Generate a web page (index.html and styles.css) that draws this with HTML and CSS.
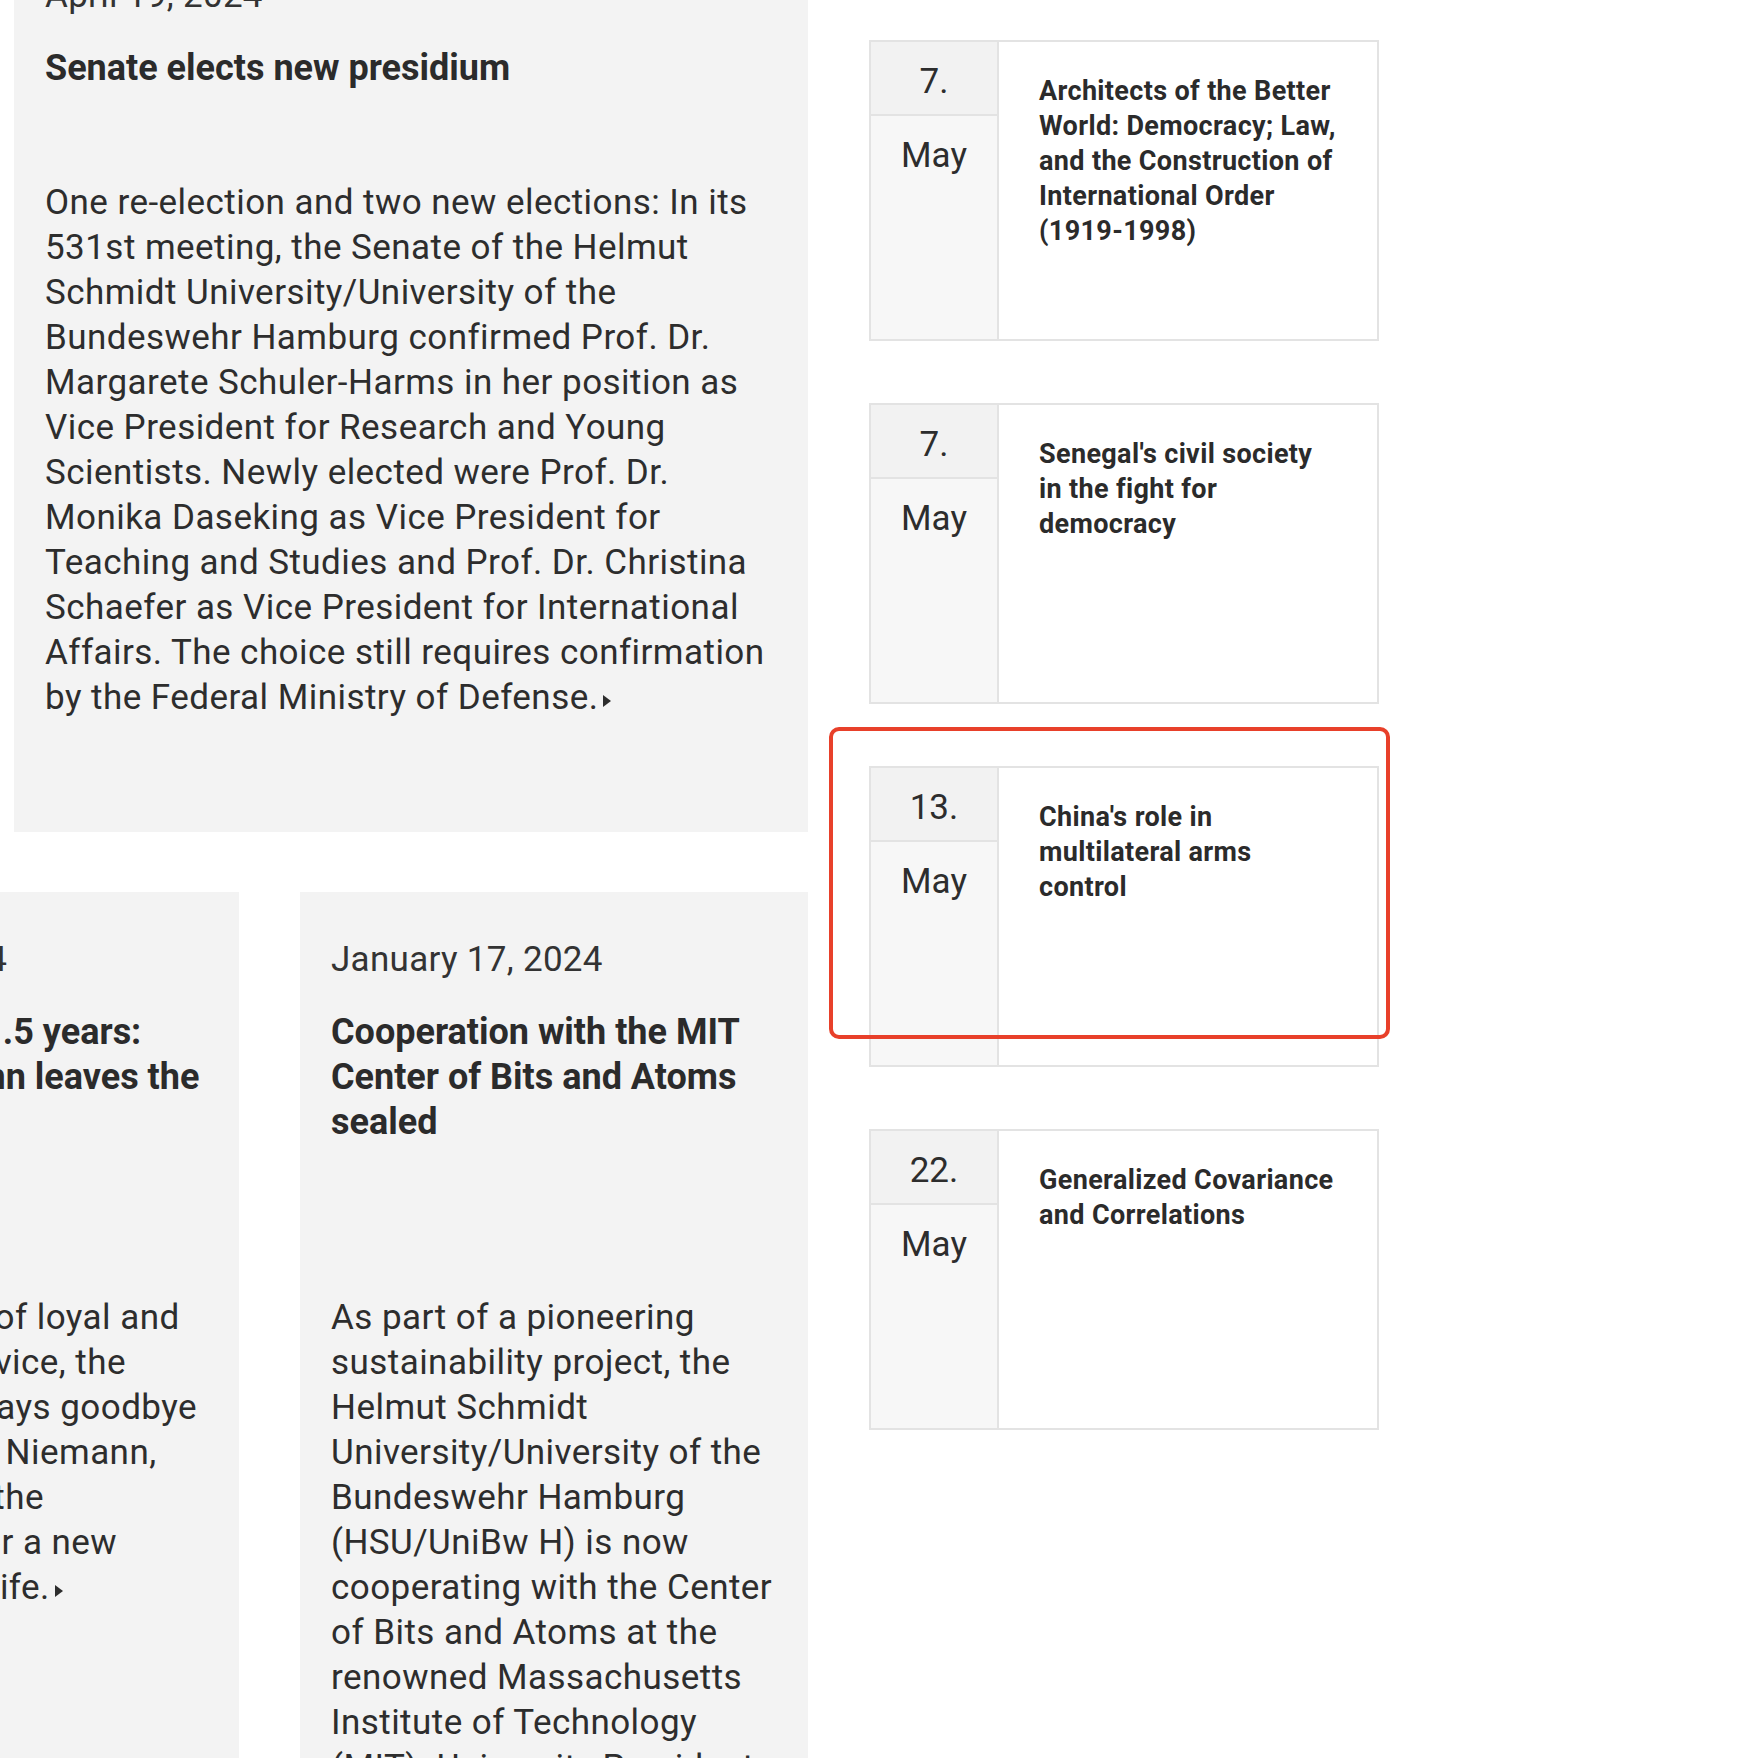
FILE: index.html
```html
<!DOCTYPE html>
<html lang="en">
<head>
<meta charset="utf-8">
<title>News and Events</title>
<link rel="stylesheet" href="styles.css">
</head>
<body>
<div class="page">
  <main class="layout">
    <section class="news">
      <article class="news-card news-card--featured">
        <p class="news-date">April 19, 2024</p>
        <h2 class="news-title">Senate elects new presidium</h2>
        <p class="news-text">One re-election and two new elections: In its 531st meeting, the Senate of the Helmut Schmidt University/University of the Bundeswehr Hamburg confirmed Prof. Dr. Margarete Schuler-Harms in her position as Vice President for Research and Young Scientists. Newly elected were Prof. Dr. Monika Daseking as Vice President for Teaching and Studies and Prof. Dr. Christina Schaefer as Vice President for International Affairs. The choice still requires confirmation by the Federal Ministry of Defense.<span class="more" aria-hidden="true"></span></p>
      </article>
      <div class="news-row">
        <article class="news-card">
          <p class="news-date">March 14, 2024</p>
          <h2 class="news-title">After nearly 41.5 years: Günter Niemann leaves the university</h2>
          <p class="news-text">After decades of loyal and<br>committed service, the<br>HSU campus says goodbye<br>to Prof. Günter Niemann,<br>who will leave the<br>Bundeswehr for a new<br>chapter of his life.<span class="more" aria-hidden="true"></span></p>
        </article>
        <article class="news-card">
          <p class="news-date">January 17, 2024</p>
          <h2 class="news-title">Cooperation with the MIT Center of Bits and Atoms sealed</h2>
          <p class="news-text">As part of a pioneering sustainability project, the Helmut Schmidt University/University of the Bundeswehr Hamburg (HSU/UniBw H) is now cooperating with the Center of Bits and Atoms at the renowned Massachusetts Institute of Technology (MIT). University President Prof. Dr. Klaus Beckmann and the director of the Center signed the agreement.</p>
        </article>
      </div>
    </section>
    <aside class="events">
      <a class="event-card" href="#">
        <div class="event-date"><span class="event-day">7.</span><span class="event-month">May</span></div>
        <div class="event-body"><h3 class="event-title">Architects of the Better World: Democracy; Law, and the Construction of International Order (1919-1998)</h3></div>
      </a>
      <a class="event-card" href="#">
        <div class="event-date"><span class="event-day">7.</span><span class="event-month">May</span></div>
        <div class="event-body"><h3 class="event-title">Senegal's civil society in the fight for democracy</h3></div>
      </a>
      <a class="event-card" href="#">
        <div class="event-date"><span class="event-day">13.</span><span class="event-month">May</span></div>
        <div class="event-body"><h3 class="event-title">China's role in multilateral arms control</h3></div>
        <span class="highlight" aria-hidden="true"></span>
      </a>
      <a class="event-card" href="#">
        <div class="event-date"><span class="event-day">22.</span><span class="event-month">May</span></div>
        <div class="event-body"><h3 class="event-title">Generalized Covariance and Correlations</h3></div>
      </a>
    </aside>
  </main>
</div>
</body>
</html>
```

FILE: styles.css
```css
* { box-sizing: border-box; }

html, body {
  margin: 0;
  padding: 0;
  background: #ffffff;
}

body {
  font-family: Roboto, "Noto Sans", sans-serif;
  color: #2d2d2d;
}

.page {
  width: 1746px;
  height: 1758px;
  overflow: hidden;
}

.layout {
  display: flex;
  align-items: flex-start;
  gap: 61px;
  padding-left: 14px;
}

/* ---------- news column ---------- */
.news {
  width: 794px;
  flex: none;
  margin-top: -72px;
  display: flex;
  flex-direction: column;
  gap: 60px;
}

.news-card {
  background: #f3f3f3;
  padding: 45px 31px 0 31px;
  min-height: 904px;
}

.news-date {
  margin: 0;
  font-size: 35px;
  line-height: 45px;
  letter-spacing: 0.3px;
  color: #333333;
}

.news-title {
  margin: 28px 0 0;
  font-size: 36px;
  line-height: 45px;
  font-weight: 700;
  color: #2b2b2b;
}

.news-text {
  margin: 150px 0 0;
  font-size: 35px;
  line-height: 45px;
  letter-spacing: 0.45px;
  color: #2d2d2d;
}

.news-card--featured .news-text {
  margin-top: 89px;
}

.more {
  display: inline-block;
  width: 0;
  height: 0;
  margin-left: 5px;
  border-left: 8px solid #2d2d2d;
  border-top: 6.5px solid transparent;
  border-bottom: 6.5px solid transparent;
  vertical-align: 2px;
}

.news-row {
  display: grid;
  grid-template-columns: 508px 508px;
  gap: 61px;
  margin-left: -283px;
}

.news-row .news-card {
  min-height: 1000px;
}

/* ---------- events column ---------- */
.events {
  width: 510px;
  flex: none;
  margin-top: 40px;
  display: flex;
  flex-direction: column;
  gap: 62px;
}

.event-card {
  position: relative;
  display: grid;
  grid-template-columns: 128px 1fr;
  height: 301px;
  border: 2px solid #e3e3e3;
  background: #ffffff;
  color: #2b2b2b;
  text-decoration: none;
}

.event-date {
  display: flex;
  flex-direction: column;
  border-right: 2px solid #e3e3e3;
  background: #f7f7f7;
  text-align: center;
  font-size: 35px;
  line-height: 45px;
  color: #2d2d2d;
}

.event-day {
  display: block;
  height: 74px;
  padding-top: 17px;
  background: #f2f2f2;
  border-bottom: 2px solid #e3e3e3;
}

.event-month {
  display: block;
  padding-top: 17px;
}

.event-body {
  padding: 32px 38px 0 40px;
}

.event-title {
  margin: 0;
  font-size: 27px;
  line-height: 35px;
  letter-spacing: 0.35px;
  font-weight: 700;
  color: #2b2b2b;
}

.highlight {
  position: absolute;
  left: -42px;
  top: -41px;
  width: 561px;
  height: 312px;
  border: 4px solid #e8402a;
  border-radius: 10px;
  pointer-events: none;
}
```
